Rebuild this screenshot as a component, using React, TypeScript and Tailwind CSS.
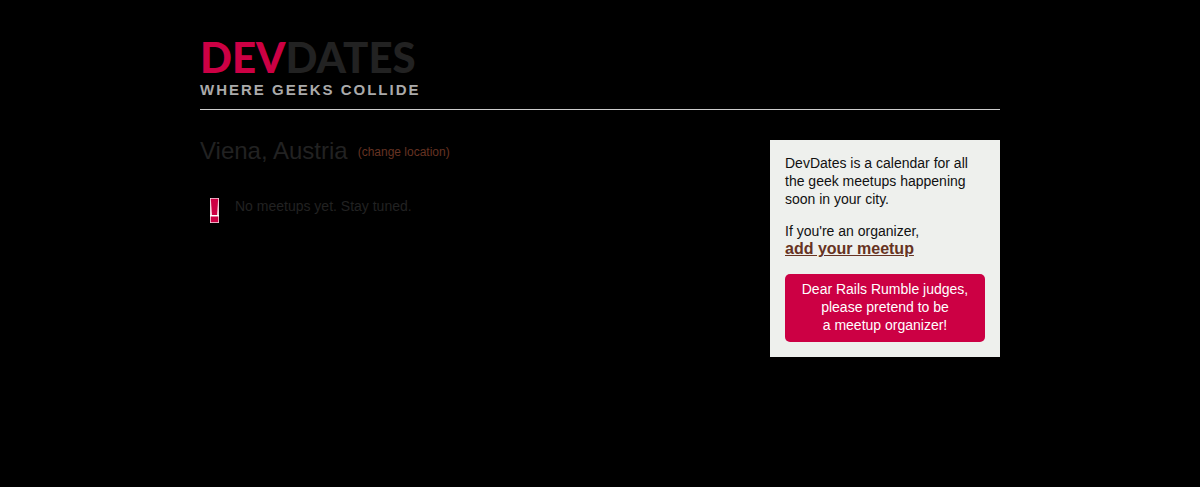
function Logo() {
  return (
    <a href="#" className="block font-['Lato',sans-serif] text-[42px] font-black leading-[46px] text-[#222222]">
      <span className="text-[#cc0044]">DEV</span>DATES
    </a>
  );
}

function NoticeIcon() {
  return (
    <svg width="9" height="25" viewBox="0 0 9 25" aria-hidden="true" className="shrink-0">
      <rect width="9" height="25" fill="#f3d3de" />
      <path d="M0.8 0.8H8.2L7 17H2Z" fill="#cc0044" />
      <rect x="0" y="17" width="9" height="1.5" fill="#ffffff" />
      <rect x="0.8" y="18.5" width="7.4" height="5.7" fill="#cc0044" />
    </svg>
  );
}

export default function App() {
  return (
    <div className="min-h-screen bg-black px-4 font-['Liberation_Sans',Arial,sans-serif] text-sm leading-[18px] text-[#222222]">
      <div className="mx-auto max-w-[800px]">
        <header className="border-b border-[#cccccc] pt-[34px] pb-[10px]">
          <Logo />
          <p className="pt-px text-[15px] leading-[18px] font-bold tracking-[2px] text-[#aaaaaa]">WHERE GEEKS COLLIDE</p>
        </header>

        <div className="flex items-start justify-between gap-8 pt-[30px]">
          <main>
            <div className="flex items-center gap-[10px]">
              <h1 className="text-2xl leading-[22px]">Viena, Austria</h1>
              <a href="#" className="pt-[2px] text-xs leading-[20px] text-[#663322]">
                (change location)
              </a>
            </div>
            <div className="flex gap-4 pt-9 pl-[10px]">
              <NoticeIcon />
              <p className="leading-4">No meetups yet. Stay tuned.</p>
            </div>
          </main>

          <aside className="w-[230px] shrink-0 bg-[#eef0ed] px-[15px] pt-[14px] pb-[15px] text-[#111111]">
            <p>
              DevDates is a calendar for all the geek meetups happening soon in your city.
            </p>
            <p className="pt-[14px]">
              If you're an organizer,
              <br />
              <a href="#" className="text-base leading-[18px] font-bold text-[#663322] underline">
                add your meetup
              </a>
            </p>
            <p className="mt-4 rounded-[5px] bg-[#cc0044] px-[15px] pt-[6px] pb-2 text-center text-white">
              Dear Rails Rumble judges,
              <br />
              please pretend to be
              <br />a meetup organizer!
            </p>
          </aside>
        </div>
      </div>
    </div>
  );
}
